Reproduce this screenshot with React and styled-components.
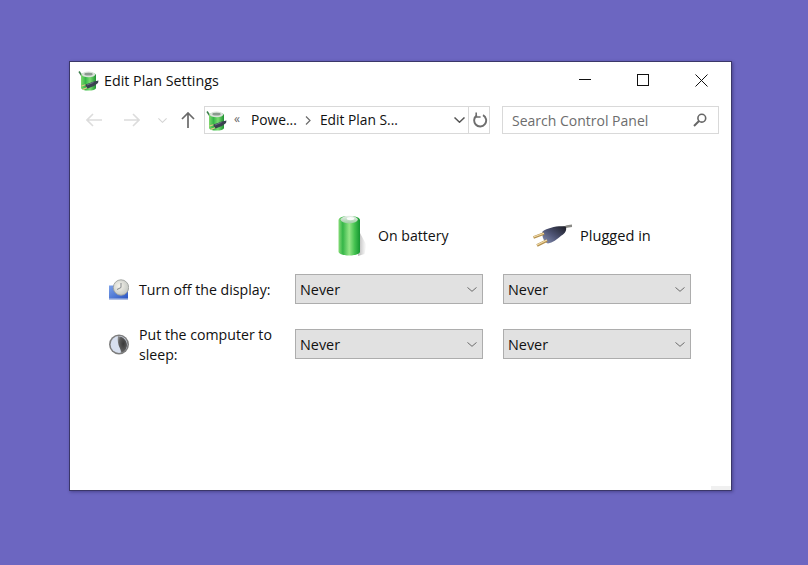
import React from "react";
import styled, { createGlobalStyle } from "styled-components";

const Global = createGlobalStyle`
  html, body { margin: 0; padding: 0; }
  body { background: #6c66c1; font-family: "Open Sans", "Noto Sans", "Liberation Sans", sans-serif; }
`;

const Page = styled.div`
  width: 808px;
  height: 565px;
  padding: 61px 0 0 69px;
  box-sizing: border-box;
  overflow: hidden;
`;

const Win = styled.div`
  width: 663px;
  height: 430px;
  box-sizing: border-box;
  background: #fff;
  border: 1px solid #3b3769;
  box-shadow: 1px 1px 3px rgba(30, 26, 80, 0.45);
  display: flex;
  flex-direction: column;
  color: #000;
`;

const TitleBar = styled.div`
  height: 36px;
  flex: none;
  display: flex;
  align-items: center;
  padding-left: 8px;
`;

const TitleText = styled.div`
  font-size: 14.3px;
  margin-left: 5px;
  flex: 1;
  color: #111;
`;

const WinBtn = styled.div`
  width: 58.5px;
  height: 36px;
  display: flex;
  align-items: center;
  justify-content: center;
`;

const NavRow = styled.div`
  flex: none;
  height: 28px;
  margin-top: 8px;
  display: flex;
  align-items: center;
  padding-left: 14px;
`;

const NavBtn = styled.div`
  width: ${(p) => p.$w}px;
  height: 28px;
  margin-left: ${(p) => p.$ml || 0}px;
  display: flex;
  align-items: center;
  justify-content: center;
`;

const Address = styled.div`
  width: 286px;
  height: 28px;
  box-sizing: border-box;
  border: 1px solid #d9d9d9;
  display: flex;
  align-items: center;
  margin-left: 9.5px;
  font-size: 13.8px;
  color: #111;
`;

const Crumbs = styled.div`
  flex: 1;
  display: flex;
  align-items: center;
  padding-left: 1px;
  min-width: 0;
`;

const Crumb = styled.span`
  white-space: nowrap;
  margin-bottom: 2px;
`;

const Quote = styled.span`
  font-size: 12px;
  color: #666;
  margin: 0 11px 2px 7px;
  line-height: 1;
`;

const Sep = styled.span`
  display: flex;
  margin: 0 9px 0 8px;
`;

const AddrChevron = styled.div`
  width: 22px;
  box-sizing: border-box;
  display: flex;
  justify-content: center;
  padding-left: 4px;
`;

const Refresh = styled.div`
  width: 21px;
  height: 100%;
  box-sizing: border-box;
  border-left: 1px solid #d9d9d9;
  padding-left: 2px;
  display: flex;
  align-items: center;
  justify-content: center;
`;

const Search = styled.div`
  width: 217px;
  height: 28px;
  box-sizing: border-box;
  border: 1px solid #d9d9d9;
  margin-left: 12px;
  display: flex;
  align-items: center;
  justify-content: space-between;
  padding: 0 11px 0 9px;
  font-size: 14px;
  color: #6d6d6d;
`;

const Body = styled.div`
  flex: 1;
  padding: 81px 0 0 38px;
`;

const Headers = styled.div`
  display: grid;
  grid-template-columns: 167px 188px 188px;
  column-gap: 20px;
  height: 40px;
  margin-bottom: 19px;
`;

const HeadCell = styled.div`
  grid-column: ${(p) => p.$col};
  display: flex;
  align-items: center;
  padding-left: ${(p) => p.$pad}px;
  font-size: ${(p) => p.$size}px;
  color: #111;
`;

const HeadLabel = styled.span`
  margin-left: ${(p) => p.$gap}px;
  margin-bottom: 2px;
`;

const Row = styled.div`
  display: grid;
  grid-template-columns: 167px 188px 188px;
  grid-template-rows: 30px;
  column-gap: 20px;
  align-items: center;
  height: 30px;
  margin-bottom: 25px;
`;

const RowLabel = styled.div`
  display: flex;
  align-items: center;
  font-size: 14.15px;
  line-height: 20px;
  color: #111;
`;

const RowText = styled.span`
  padding-top: 2px;
`;

const RowIcon = styled.div`
  width: 21px;
  flex: none;
  display: flex;
  margin-right: 10px;
`;

const Select = styled.div`
  height: 30px;
  box-sizing: border-box;
  background: #e1e1e1;
  border: 1px solid #adadad;
  display: flex;
  align-items: center;
  justify-content: space-between;
  padding: 0 5px 0 4px;
  font-size: 14.4px;
  color: #111;
`;

const SelectChevron = styled.span`
  display: flex;
`;

const Footer = styled.div`
  flex: none;
  height: 4px;
  display: flex;
  justify-content: flex-end;
`;

const Grip = styled.div`
  width: 20px;
  background: #f0f0f0;
`;

const Chevron = ({ w = 11, h = 6, c = "#555", sw = 1 }) => (
  <svg width={w} height={h} viewBox="0 0 11 6" fill="none" preserveAspectRatio="none">
    <path d="M0.5 0.5 L5.5 5.2 L10.5 0.5" stroke={c} strokeWidth={sw} />
  </svg>
);

const Arrow = ({ dir, c }) => (
  <svg width="16" height="14" viewBox="0 0 16 14" fill="none" style={{ transform: dir === "right" ? "scaleX(-1)" : "none" }}>
    <path d="M1 7 H16 M7 1 L1 7 L7 13" stroke={c} strokeWidth="1.6" />
  </svg>
);

const PowerIcon = ({ id }) => (
  <svg width="21" height="21" viewBox="0 0 21 21">
    <defs>
      <linearGradient id={id} x1="0" x2="1" y1="0" y2="0">
        <stop offset="0" stopColor="#7fd86e" />
        <stop offset=".3" stopColor="#36b749" />
        <stop offset=".6" stopColor="#78dc70" />
        <stop offset="1" stopColor="#1f9233" />
      </linearGradient>
    </defs>
    <path d="M1 1.5 L4 6" stroke="#3a7d4a" strokeWidth="1.5" fill="none" />
    <path d="M3 5 C3 1.5 18 1.5 18 5 V18 C18 21.4 3 21.4 3 18 Z" fill={`url(#${id})`} />
    <ellipse cx="10.5" cy="4.4" rx="6.8" ry="2.8" fill="#d9e0d9" />
    <ellipse cx="10.5" cy="4.2" rx="4.2" ry="1.4" fill="#8a9a8e" />
    <path d="M7 14.8 L16 11.4 L20.5 10.6 L20 13 L16 16 L9.5 18.4 Z" fill="#3a4150" />
    <path d="M9 15 L15.5 12.4" stroke="#6c7488" strokeWidth="1" />
    <path d="M7.5 14.8 L3.5 16 M9 17.8 L5 19.4" stroke="#e3c685" strokeWidth="1.2" />
  </svg>
);

const BatteryIcon = () => (
  <svg width="30" height="42" viewBox="0 0 30 42">
    <defs>
      <linearGradient id="bat" x1="0" x2="1" y1="0" y2="0">
        <stop offset="0" stopColor="#86dc78" />
        <stop offset=".2" stopColor="#35b648" />
        <stop offset=".5" stopColor="#96e688" />
        <stop offset=".75" stopColor="#45c250" />
        <stop offset="1" stopColor="#149530" />
      </linearGradient>
      <linearGradient id="batTop" x1="0" x2="0" y1="0" y2="1">
        <stop offset="0" stopColor="#e8eeea" />
        <stop offset="1" stopColor="#9fcfa4" />
      </linearGradient>
      <linearGradient id="batShade" x1="0" x2="1" y1="0" y2="0">
        <stop offset="0" stopColor="#666" stopOpacity=".5" />
        <stop offset="1" stopColor="#888" stopOpacity="0" />
      </linearGradient>
    </defs>
    <path d="M23 18 L29.5 30 L27.5 39 L21 41 Z" fill="url(#batShade)" />
    <path d="M1.5 5 C1.5 -0.5 23 -0.5 23 5 V36.5 C23 41.8 1.5 41.8 1.5 36.5 Z" fill="url(#bat)" />
    <ellipse cx="12.2" cy="4.6" rx="8.6" ry="3.8" fill="url(#batTop)" />
    <ellipse cx="13.5" cy="3.6" rx="3.8" ry="1.7" fill="#fbfcfb" />
  </svg>
);

const PlugIcon = () => (
  <svg width="42" height="25" viewBox="0 0 42 25">
    <defs>
      <linearGradient id="plugBody" x1="0" x2="1" y1="1" y2="0">
        <stop offset="0" stopColor="#8a94b6" />
        <stop offset=".45" stopColor="#505677" />
        <stop offset="1" stopColor="#1b1c24" />
      </linearGradient>
    </defs>
    <path d="M30 4.5 C33 3 36 2 40 1.8" stroke="#8a8a86" strokeWidth="2.4" fill="none" />
    <path d="M10.5 7.5 C16 3.5 26 1.5 33.5 2.5 C35.5 6 33 9.5 29.5 11.5 C25 15.5 20.5 18.5 16 19.5 C12.5 18.5 9.5 13 10.5 7.5 Z" fill="url(#plugBody)" />
    <path d="M12 9.5 L1.5 13.5" stroke="#b48f4c" strokeWidth="2.8" />
    <path d="M12 9.2 L1.5 13" stroke="#f1dcaa" strokeWidth="1.1" />
    <path d="M15 16.5 L5 21.5" stroke="#b48f4c" strokeWidth="2.8" />
    <path d="M15 16 L5 21" stroke="#f1dcaa" strokeWidth="1.1" />
  </svg>
);

const ClockIcon = () => (
  <svg width="21" height="21" viewBox="0 0 21 21">
    <defs>
      <linearGradient id="scr" x1="0" x2="1" y1="0" y2="1">
        <stop offset="0" stopColor="#7ea3ea" />
        <stop offset="1" stopColor="#2652c0" />
      </linearGradient>
      <radialGradient id="clk" cx=".4" cy=".4" r=".7">
        <stop offset="0" stopColor="#f6f4ec" />
        <stop offset="1" stopColor="#bec2be" />
      </radialGradient>
    </defs>
    <rect x="1" y="6.5" width="19" height="14" fill="url(#scr)" />
    <rect x="1" y="19.5" width="19" height="1.2" fill="#b9c6e6" />
    <circle cx="13" cy="8.5" r="7.7" fill="url(#clk)" stroke="#9ea29e" strokeWidth=".9" />
    <path d="M13 4 V8.5 L9 10.5" stroke="#85898c" strokeWidth="1" fill="none" />
  </svg>
);

const MoonIcon = () => (
  <svg width="21" height="21" viewBox="0 0 21 21">
    <defs>
      <radialGradient id="moon" cx=".6" cy=".45" r=".6">
        <stop offset="0" stopColor="#3a3a3a" />
        <stop offset=".75" stopColor="#5e5e5e" />
        <stop offset="1" stopColor="#858585" />
      </radialGradient>
    </defs>
    <circle cx="11" cy="10.5" r="10" fill="#7d7d7d" />
    <circle cx="11" cy="10.5" r="8.4" fill="#d7dfee" />
    <path d="M10 2.2 C15 2.5 19 6 19 11 C19 15 16 18.5 13 18.9 C13 15.5 11.5 14 10.5 11 C9.8 8 9.5 5 10 2.2 Z" fill="url(#moon)" />
  </svg>
);

const Settings = [
  { label: "Turn off the display:", Icon: ClockIcon },
  { label: "Put the computer to sleep:", Icon: MoonIcon },
];

export default function App() {
  return (
    <Page>
      <Global />
      <Win>
        <TitleBar>
          <PowerIcon id="pw1" />
          <TitleText>Edit Plan Settings</TitleText>
          <WinBtn>
            <svg width="12" height="2" viewBox="0 0 12 2"><rect width="12" height="1" fill="#111" /></svg>
          </WinBtn>
          <WinBtn>
            <svg width="12" height="12" viewBox="0 0 12 12" fill="none"><rect x=".5" y=".5" width="11" height="11" stroke="#111" /></svg>
          </WinBtn>
          <WinBtn>
            <svg width="13" height="13" viewBox="0 0 13 13" fill="none"><path d="M.5 .5 L12.5 12.5 M12.5 .5 L.5 12.5" stroke="#111" /></svg>
          </WinBtn>
        </TitleBar>
        <NavRow>
          <NavBtn $w={20}><Arrow dir="left" c="#dcdcdc" /></NavBtn>
          <NavBtn $w={20} $ml={18}><Arrow dir="right" c="#dcdcdc" /></NavBtn>
          <NavBtn $w={10} $ml={15.5}><Chevron w={9} h={5} c="#d4d4d4" sw={1.3} /></NavBtn>
          <NavBtn $w={14} $ml={13}>
            <svg width="14" height="16" viewBox="0 0 14 16" fill="none"><path d="M7 16 V1 M1 7 L7 1 L13 7" stroke="#6a6a6a" strokeWidth="1.7" /></svg>
          </NavBtn>
          <Address>
            <Crumbs>
              <PowerIcon id="pw2" />
              <Quote>«</Quote>
              <Crumb>Powe...</Crumb>
              <Sep>
                <svg width="6" height="9" viewBox="0 0 6 9" fill="none"><path d="M1 .5 L5 4.5 L1 8.5" stroke="#6a6a6a" strokeWidth="1.2" /></svg>
              </Sep>
              <Crumb>Edit Plan S...</Crumb>
            </Crumbs>
            <AddrChevron><Chevron w={11} h={6} c="#555" sw={1.5} /></AddrChevron>
            <Refresh>
              <svg width="15" height="16" viewBox="0 0 15 16" fill="none">
                <path d="M10 3.2 A6 6 0 1 1 4 3.4" stroke="#6e6e6e" strokeWidth="1.9" />
                <path d="M3.2 .6 V5 H7.6" stroke="#6e6e6e" strokeWidth="1.6" />
              </svg>
            </Refresh>
          </Address>
          <Search>
            <span>Search Control Panel</span>
            <svg width="14" height="14" viewBox="0 0 14 14" fill="none">
              <circle cx="8.8" cy="5.2" r="3.9" stroke="#666" strokeWidth="1.6" />
              <path d="M6 8 L1 13" stroke="#666" strokeWidth="2" />
            </svg>
          </Search>
        </NavRow>
        <Body>
          <Headers>
            <HeadCell $col={2} $pad={42} $size={14.1}>
              <BatteryIcon />
              <HeadLabel $gap={11}>On battery</HeadLabel>
            </HeadCell>
            <HeadCell $col={3} $pad={29} $size={14.6}>
              <PlugIcon />
              <HeadLabel $gap={6}>Plugged in</HeadLabel>
            </HeadCell>
          </Headers>
          {Settings.map(({ label, Icon }) => (
            <Row key={label}>
              <RowLabel>
                <RowIcon><Icon /></RowIcon>
                <RowText>{label}</RowText>
              </RowLabel>
              {[0, 1].map((i) => (
                <Select key={i}>
                  <span>Never</span>
                  <SelectChevron><Chevron w={10} h={5} c="#5a5a5a" /></SelectChevron>
                </Select>
              ))}
            </Row>
          ))}
        </Body>
        <Footer><Grip /></Footer>
      </Win>
    </Page>
  );
}
